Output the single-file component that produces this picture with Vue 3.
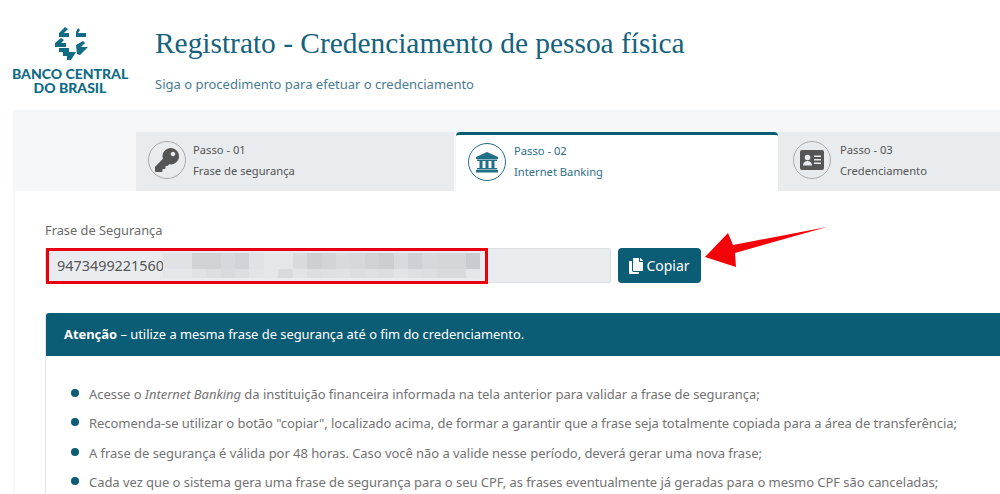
<template>
  <div class="page">
    <header class="top">
      <div class="logo">
        <svg class="logo-mark" viewBox="0 0 36 36" width="36" height="36">
          <path d="M12 1l3 2-4 4h5v4H6V7z" />
          <path d="M25 2l2 2-2 3h8v4H23V6z" />
          <path d="M8 12l3 2-3 3h5v4H2v-4z" />
          <path d="M6 22h10v4h7l-5 8h-4v-4h-4v-4H6z" />
          <path d="M23 19l7-4 2 2-4 4h7l-8 8-3-1z" />
        </svg>
        <div class="logo-text">BANCO CENTRAL<br />DO BRASIL</div>
      </div>
      <div class="heading">
        <h1>Registrato - Credenciamento de pessoa física</h1>
        <p>Siga o procedimento para efetuar o credenciamento</p>
      </div>
    </header>

    <section class="panel">
      <nav class="tabs">
        <div v-for="tab in tabs" :key="tab.step" class="tab" :class="{ active: tab.active }">
          <span class="tab-icon">
            <svg v-if="tab.icon === 'key'" viewBox="0 0 512 512" width="24" height="24">
              <path fill="currentColor" d="M512 176.001C512 273.203 433.202 352 336 352c-11.22 0-22.19-1.062-32.827-3.069l-24.012 27.014A23.999 23.999 0 0 1 261.223 384H224v40c0 13.255-10.745 24-24 24h-40v40c0 13.255-10.745 24-24 24H24c-13.255 0-24-10.745-24-24v-78.059c0-6.365 2.529-12.47 7.029-16.971l161.802-161.802C163.108 213.814 160 195.271 160 176 160 78.798 238.797.001 335.999 0 433.488-.001 512 78.511 512 176.001zM336 128c0 26.51 21.49 48 48 48s48-21.49 48-48-21.49-48-48-48-48 21.49-48 48z" />
            </svg>
            <svg v-else-if="tab.icon === 'bank'" viewBox="0 0 24 22" width="24" height="22">
              <path fill="currentColor" d="M12 1L23 6v2H1V6z" />
              <rect fill="currentColor" x="2" y="8.500" width="20" height="1.500" />
              <rect fill="currentColor" x="4.500" y="10" width="3" height="7" />
              <rect fill="currentColor" x="10.500" y="10" width="3" height="7" />
              <rect fill="currentColor" x="16.500" y="10" width="3" height="7" />
              <rect fill="currentColor" x="2" y="17" width="20" height="1.500" />
              <rect fill="currentColor" x="1" y="19" width="22" height="2.500" />
            </svg>
            <svg v-else viewBox="0 0 24 20" width="24" height="20">
              <rect fill="currentColor" x="0" y="0" width="24" height="20" rx="2" />
              <circle fill="#e9ecef" cx="7.500" cy="7.500" r="2.800" />
              <path fill="#e9ecef" d="M3 15.500c0-3 2-4.500 4.500-4.500s4.500 1.500 4.500 4.500z" />
              <rect fill="#e9ecef" x="14" y="5.500" width="7" height="1.500" />
              <rect fill="#e9ecef" x="14" y="9" width="7" height="1.500" />
              <rect fill="#e9ecef" x="14" y="12.500" width="7" height="1.500" />
            </svg>
          </span>
          <span class="tab-text">
            <span>{{ tab.step }}</span>
            <span>{{ tab.label }}</span>
          </span>
        </div>
      </nav>

      <div class="content">
        <label class="field-label">Frase de Segurança</label>
        <div class="field-row">
          <div class="phrase">
            <span class="phrase-value">9473499221560</span>
            <div class="blur">
              <i v-for="(c, i) in blurCells" :key="i" :style="{ background: c }"></i>
            </div>
            <div class="red-box"></div>
          </div>
          <button class="copy">
            <svg viewBox="0 0 448 512" width="14" height="16">
              <path fill="currentColor" d="M320 448v40c0 13.255-10.745 24-24 24H24c-13.255 0-24-10.745-24-24V120c0-13.255 10.745-24 24-24h72v296c0 30.879 25.121 56 56 56h168zm0-344V0H152c-13.255 0-24 10.745-24 24v368c0 13.255 10.745 24 24 24h272c13.255 0 24-10.745 24-24V128H344c-13.2 0-24-10.8-24-24zm120.971-31.029L375.029 7.029A24 24 0 0 0 358.059 0H352v96h96v-6.059a24 24 0 0 0-7.029-16.97z" />
            </svg>
            Copiar
          </button>
        </div>

        <div class="card">
          <div class="card-head"><b>Atenção</b> – utilize a mesma frase de segurança até o fim do credenciamento.</div>
          <ul>
            <li>Acesse o <em>Internet Banking</em> da instituição financeira informada na tela anterior para validar a frase de segurança;</li>
            <li>Recomenda-se utilizar o botão "copiar", localizado acima, de formar a garantir que a frase seja totalmente copiada para a área de transferência;</li>
            <li>A frase de segurança é válida por 48 horas. Caso você não a valide nesse período, deverá gerar uma nova frase;</li>
            <li>Cada vez que o sistema gera uma frase de segurança para o seu CPF, as frases eventualmente já geradas para o mesmo CPF são canceladas;</li>
          </ul>
        </div>
      </div>
    </section>

    <svg class="arrow" viewBox="0 0 130 46" width="130" height="46">
      <path fill="#f40009" d="M0 30L23 6 28 18 122 0 30 26 31 40z" />
    </svg>
  </div>
</template>

<script setup>
const tabs = [
  { step: 'Passo - 01', label: 'Frase de segurança', icon: 'key' },
  { step: 'Passo - 02', label: 'Internet Banking', icon: 'bank', active: true },
  { step: 'Passo - 03', label: 'Credenciamento', icon: 'card' },
]

// pixelated part of the phrase, two rows of 22 cells
const topRow = ['e0e3e6','e0e3e6','d0d3d6','d0d3d6','d6d9dc','d0d3d7','e0e3e6','e4e7ea','e4e7ea','d8dbde','ccd0d3','d2d5d8','d8dbde','d6d9dc','d0d3d6','cbcfd2','d8dbde','cdd0d4','d6d9dc','d4d7da','d4d7da','c8ccd0']
const bottomRow = ['e4e7ea','e4e7ea','e0e3e6','dcdfe2','d8dbde','dcdfe2','e2e5e8','e4e7ea','d8dbde','e2e5e8','dcdfe2','dee1e4','e0e3e6','dcdfe2','dee1e4','dcdfe2','e2e5e8','dee1e4','dcdfe2','d8dbde','d8dbde','e4e7ea']
const blurCells = [...topRow, ...bottomRow].map(c => '#' + c)
</script>

<style>
html, body { margin: 0; overflow: hidden; background: #fff; }
</style>

<style scoped>
.page {
  position: relative;
  width: 1000px;
  height: 494px;
  overflow: hidden;
  background: #fff;
  font-family: "Noto Sans", "Open Sans", sans-serif;
  color: #666;
}
.top { display: flex; height: 110px; box-sizing: border-box; }
.logo {
  width: 155px;
  padding: 26px 0 0 12px;
  box-sizing: border-box;
  display: flex;
  flex-direction: column;
  align-items: flex-start;
}
.logo-mark { margin-left: 41px; fill: #0f6b86; }
.logo-text {
  width: 116px;
  margin-top: 5px;
  text-align: center;
  font-family: "Lato", sans-serif;
  font-weight: 900;
  font-size: 14px;
  line-height: 14px;
  white-space: nowrap;
  color: #0f6b86;
}
.heading h1 {
  margin: 25px 0 0;
  font-family: "Liberation Serif", serif;
  font-weight: 400;
  font-size: 29.400px;
  line-height: 36px;
  color: #15627c;
  white-space: nowrap;
}
.heading p {
  margin: 14px 0 0;
  font-size: 13px;
  line-height: 18px;
  color: #4a7c90;
}
.panel {
  margin-left: 13px;
  padding-top: 22px;
  background: #f6f7f9;
  height: 384px;
  box-sizing: border-box;
}
.tabs { display: flex; padding-left: 123px; height: 59px; }
.tab {
  display: flex;
  align-items: center;
  gap: 7px;
  box-sizing: border-box;
  width: 320px;
  padding: 0 0 3px 12px;
  background: #e9ecef;
  color: #555;
  font-size: 11.200px;
  flex: none;
}
.tab:first-child { width: 318px; }
.tab.active {
  width: 322px;
  margin-left: 2px;
  gap: 8px;
  background: #fff;
  border-top: 3px solid #0b5c75;
  border-radius: 4px 4px 0 0;
  color: #2f6f87;
}
.tab.active + .tab { padding-left: 15px; gap: 9px; }
.tab-icon {
  width: 38px;
  height: 38px;
  flex: none;
  border: 1px solid #aaa;
  border-radius: 50%;
  box-sizing: border-box;
  display: flex;
  align-items: center;
  justify-content: center;
  color: #555;
}
.tab.active .tab-icon { border-color: #1f6f88; color: #1f6f88; }
.tab-text { display: flex; flex-direction: column; gap: 3px; line-height: 18px; }
.content {
  margin-left: 2px;
  background: #fff;
  padding: 30px 0 0 30px;
  height: 303px;
  box-sizing: border-box;
}
.field-label { display: block; font-size: 12.800px; line-height: 18px; color: #6a6a6a; }
.field-row { display: flex; gap: 7px; margin-top: 9px; }
.phrase {
  position: relative;
  width: 566px;
  height: 35px;
  box-sizing: border-box;
  background: #e9ecef;
  border: 1px solid #dde0e3;
  border-radius: 2px;
  padding-left: 11px;
  font-size: 14.400px;
  line-height: 33px;
  color: #555;
}
.blur {
  position: absolute;
  left: 117px;
  top: 4px;
  width: 317px;
  height: 25px;
  display: grid;
  grid-template-columns: repeat(22, 1fr);
  grid-template-rows: 16px 9px;
}
.red-box {
  position: absolute;
  left: 0;
  top: -1px;
  width: 442px;
  height: 36px;
  box-sizing: border-box;
  border: 3px solid #e8000d;
}
.copy {
  width: 83px;
  height: 35px;
  display: flex;
  align-items: center;
  justify-content: center;
  gap: 3px;
  border: 0;
  border-radius: 4px;
  background: #0b5c75;
  color: #fff;
  font-family: inherit;
  font-size: 14px;
}
.card {
  margin-top: 30px;
  border-left: 1px solid #e3e6e8;
  height: 200px;
}
.card-head {
  height: 43px;
  padding-left: 18px;
  line-height: 43px;
  background: #0b5c75;
  border-radius: 3px 0 0 0;
  color: #fff;
  font-size: 12.900px;
  white-space: nowrap;
}
ul { margin: 0; padding: 24px 0 0 25px; list-style: none; }
li {
  position: relative;
  padding-left: 18px;
  height: 29.400px;
  line-height: 29px;
  font-size: 13px;
  letter-spacing: -0.05px;
  white-space: nowrap;
  color: #737373;
}
li::before {
  content: "";
  position: absolute;
  left: 0;
  top: 9px;
  width: 8px;
  height: 8px;
  border-radius: 50%;
  background: #0b5c75;
}
.arrow { position: absolute; left: 705px; top: 227px; }
</style>
